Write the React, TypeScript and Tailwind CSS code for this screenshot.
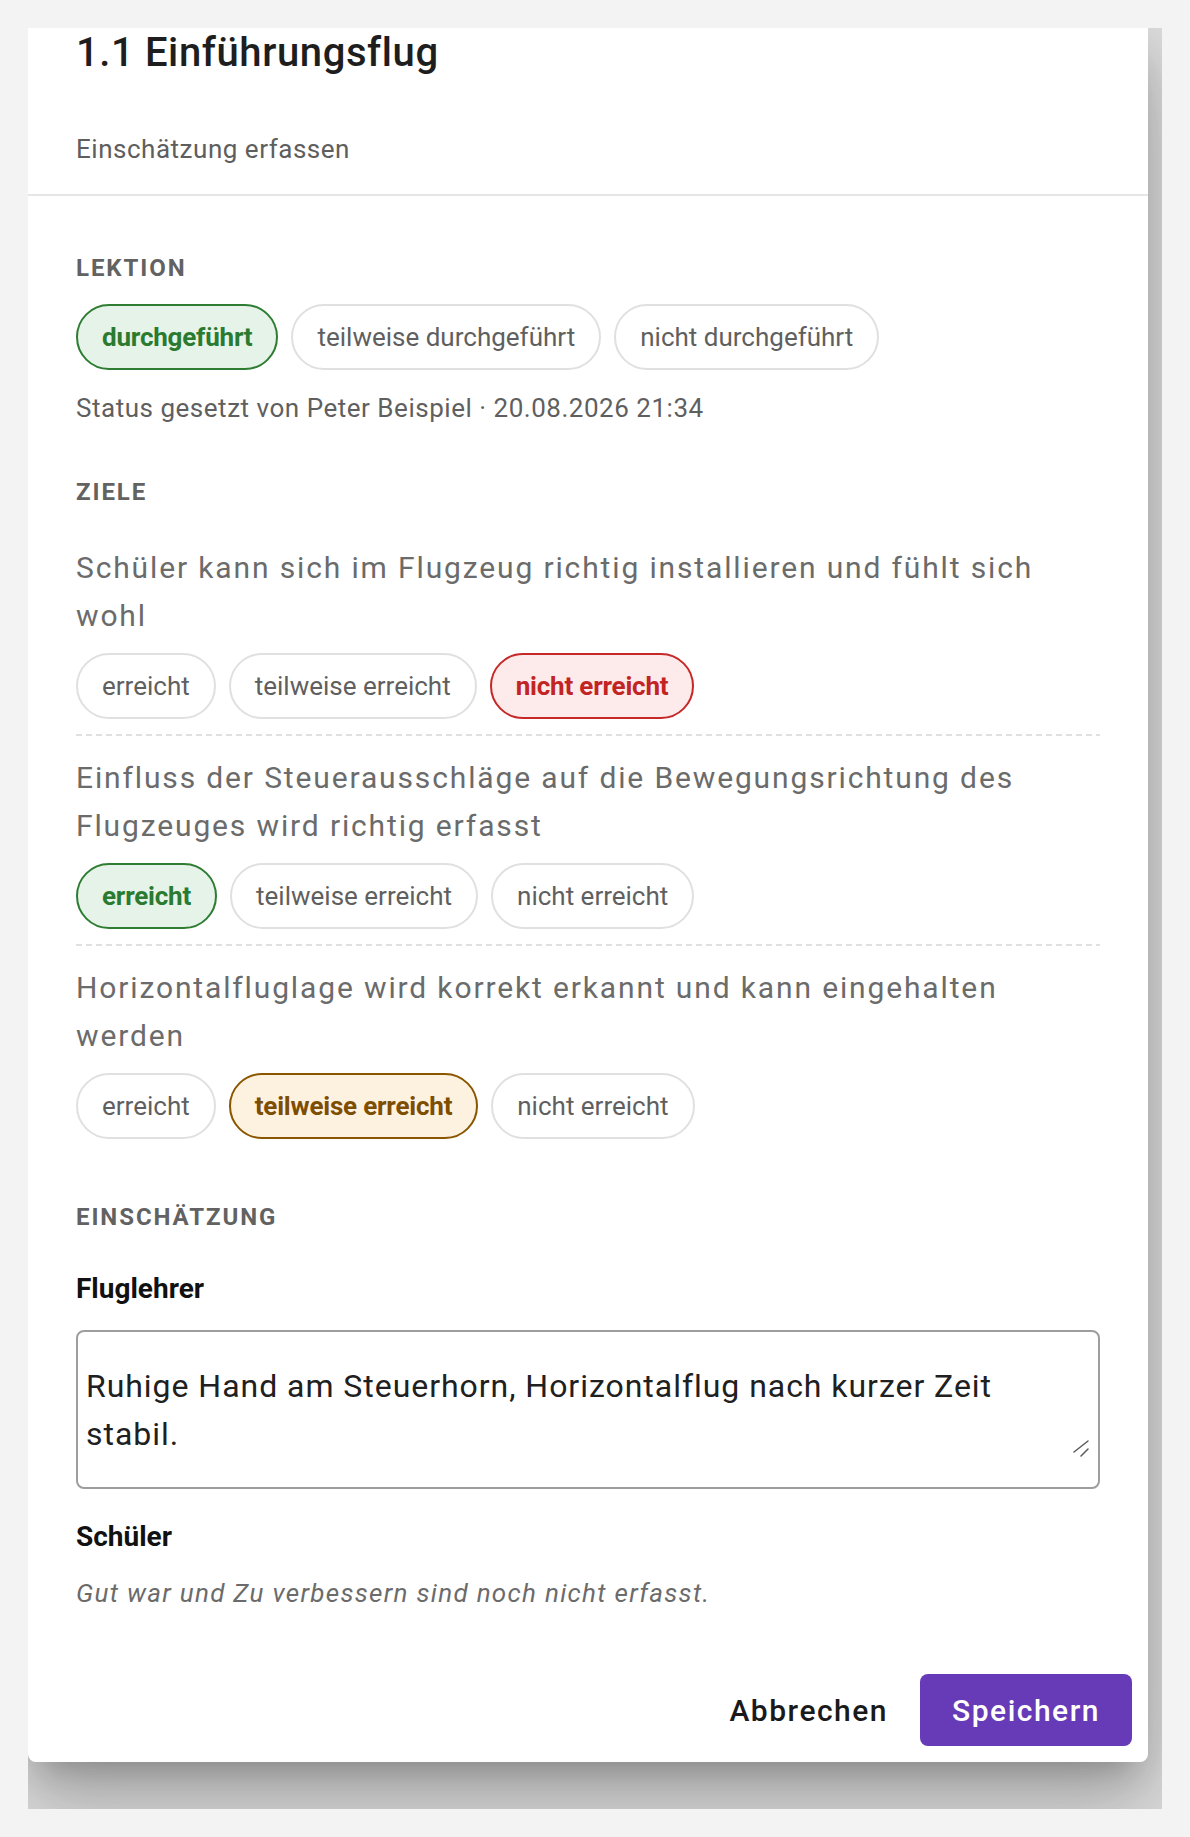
import React from 'react';

type Tone = 'none' | 'green' | 'red' | 'amber';

const toneClass: Record<Tone, string> = {
  none: 'border-[#e0e0e0] bg-white text-[#5f5f5f] font-normal',
  green: 'border-[#2e7d32] bg-[#e6f3e8] text-[#2a7a30] font-bold tracking-[-0.2px]',
  red: 'border-[#c62828] bg-[#fdeaea] text-[#c22424] font-bold tracking-[-0.2px]',
  amber: 'border-[#8a5600] bg-[#fdf2e0] text-[#7d4d00] font-bold tracking-[-0.2px]',
};

const Chip = ({ label, tone = 'none' }: { label: string; tone?: Tone }) => (
  <span
    className={`inline-flex h-[66px] items-center rounded-full border-2 px-[24px] text-[26px] leading-none whitespace-nowrap ${toneClass[tone]}`}
  >
    {label}
  </span>
);

const Overline = ({ children, className = '' }: { children: React.ReactNode; className?: string }) => (
  <div className={`text-[24px] leading-[32px] font-bold uppercase tracking-[0.08em] text-[#626262] ${className}`}>
    {children}
  </div>
);

const goals: { text: string; selected: Tone; idx: number }[] = [
  { text: 'Schüler kann sich im Flugzeug richtig installieren und fühlt sich wohl', selected: 'red', idx: 2 },
  { text: 'Einfluss der Steuerausschläge auf die Bewegungsrichtung des Flugzeuges wird richtig erfasst', selected: 'green', idx: 0 },
  { text: 'Horizontalfluglage wird korrekt erkannt und kann eingehalten werden', selected: 'amber', idx: 1 },
];

const goalLabels = ['erreicht', 'teilweise erreicht', 'nicht erreicht'];

const Dashed = () => (
  <div className="h-[2px] w-full bg-[linear-gradient(to_right,#e0e0e0_6px,transparent_6px)] bg-[length:10px_2px]" />
);

export default function App() {
  return (
    <div className="min-h-[1837px] bg-[#f3f3f3] pl-[28px] pt-[28px] font-[Roboto,'Noto_Sans',sans-serif]">
      <div className="h-[1781px] w-[1134px] overflow-hidden bg-[#e0e0e0]">
        <div className="flex w-[1120px] flex-col rounded-b-[8px] bg-white shadow-[0_22px_30px_-14px_rgba(0,0,0,0.22),0_48px_76px_6px_rgba(0,0,0,0.14),0_18px_92px_16px_rgba(0,0,0,0.12)]">
          {/* Header */}
          <div className="px-[48px] pt-[1px] pb-[25px]">
            <h2 className="text-[40px] leading-[48px] font-medium tracking-[0.015em] text-[#1e1e1e]">1.1 Einführungsflug</h2>
            <p className="mt-[52px] text-[26px] leading-[40px] tracking-[0.02em] text-[#5e5e5e]">Einschätzung erfassen</p>
          </div>
          <div className="h-[2px] bg-[#e6e6e6]" />

          {/* Content */}
          <div className="px-[48px] pt-[56px]">
            <Overline>Lektion</Overline>
            <div className="mt-[20px] flex gap-[13px]">
              <Chip label="durchgeführt" tone="green" />
              <Chip label="teilweise durchgeführt" />
              <Chip label="nicht durchgeführt" />
            </div>
            <p className="mt-[22px] text-[26px] leading-[32px] tracking-[0.02em] text-[#5f5f5f]">
              Status gesetzt von Peter Beispiel · 20.08.2026 21:34
            </p>

            <Overline className="mt-[52px]">Ziele</Overline>
            <div className="mt-[36px] flex flex-col">
              {goals.map((g, i) => (
                <div key={g.text}>
                  {i > 0 && (
                    <div className="pb-[18px]">
                      <Dashed />
                    </div>
                  )}
                  <div className={i < goals.length - 1 ? 'pb-[15px]' : ''}>
                    <p className="text-[30px] leading-[48px] tracking-[0.062em] text-[#6b6b6b]">{g.text}</p>
                    <div className="mt-[13px] flex gap-[13px]">
                      {goalLabels.map((l, j) => (
                        <Chip key={l} label={l} tone={j === g.idx ? g.selected : 'none'} />
                      ))}
                    </div>
                  </div>
                </div>
              ))}
            </div>

            <Overline className="mt-[62px]">Einschätzung</Overline>
            <div className="mt-[36px] text-[28px] leading-[40px] font-bold text-[#111]">Fluglehrer</div>
            <div className="relative mt-[21px] rounded-[8px] border-2 border-[#9e9e9e] pl-[8px] pr-[12px] pt-[30px] pb-[29px]">
              <textarea
                className="block h-[96px] w-full resize-none bg-transparent text-[32px] leading-[48px] tracking-[0.03em] text-[#202020] outline-none"
                defaultValue="Ruhige Hand am Steuerhorn, Horizontalflug nach kurzer Zeit stabil."
              />
              <svg
                className="absolute right-[8px] bottom-[30px] h-[18px] w-[18px]"
                viewBox="0 0 18 18"
                fill="none"
                stroke="#5a5a5a"
                strokeWidth="1.5"
                strokeLinecap="round"
              >
                <path d="M2 13L16 2" />
                <path d="M9 17L16 10" />
              </svg>
            </div>
            <div className="mt-[28px] text-[28px] leading-[40px] font-bold text-[#111]">Schüler</div>
            <p className="mt-[16px] text-[26px] leading-[40px] italic tracking-[0.05em] text-[#6b6b6b]">
              Gut war und Zu verbessern sind noch nicht erfasst.
            </p>
          </div>

          {/* Actions */}
          <div className="mt-[45px] flex justify-end gap-[16px] p-[16px]">
            <button className="h-[72px] rounded-[8px] px-[16px] text-[30px] font-medium tracking-[1.5px] text-[#1a1a1a]">
              Abbrechen
            </button>
            <button className="h-[72px] rounded-[8px] bg-[#673ab7] px-[32px] text-[30px] font-medium tracking-[1.5px] text-white">
              Speichern
            </button>
          </div>
        </div>
      </div>
    </div>
  );
}
